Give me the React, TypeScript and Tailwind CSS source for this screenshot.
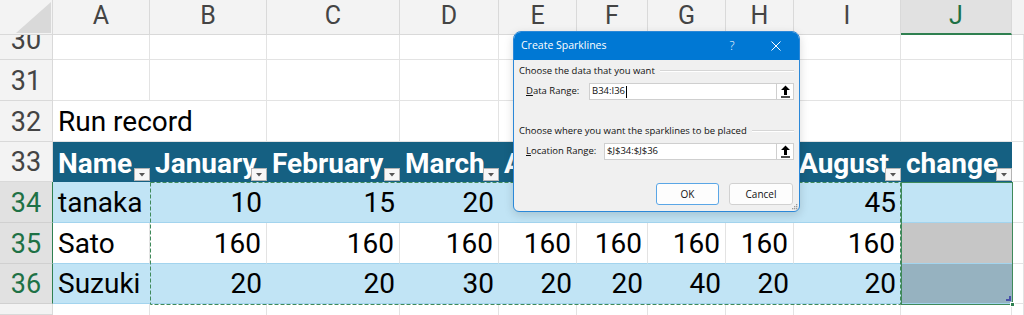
import type { ReactNode } from 'react';

const letters = ['A', 'B', 'C', 'D', 'E', 'F', 'G', 'H', 'I', 'J'];
const headers = ['Name', 'January', 'February', 'March', 'April', 'May', 'June', 'July', 'August', 'change'];

// rows 34-36 of the table; J is the empty "change" column
const records = [
  { row: 34, name: 'tanaka', values: [10, 15, 20, 25, 30, 35, 40, 45], band: true, j: 'bg-[#c1e4f5]' },
  { row: 35, name: 'Sato', values: [160, 160, 160, 160, 160, 160, 160, 160], band: false, j: 'bg-[#c6c6c6]' },
  { row: 36, name: 'Suzuki', values: [20, 20, 30, 20, 20, 40, 20, 20], band: true, j: 'bg-[#96b2c0]' },
];

const blank = 'border-r border-b border-[#e3e3e3] bg-white';

function RowHead({ n, selected = false }: { n?: number; selected?: boolean }) {
  return (
    <div
      className={
        selected
          ? 'flex items-end justify-center overflow-hidden pb-[5px] text-[27px] leading-[27px] bg-[#e1e1e1] text-[#1e7145] border-b border-b-[#d0d0d0] border-r border-r-[#2f8050]'
          : 'flex items-end justify-center overflow-hidden pb-[5px] text-[27px] leading-[27px] bg-[#f3f3f3] text-[#444] border-b border-r border-[#d9d9d9]'
      }
    >
      {n}
    </div>
  );
}

function Cell({ children, className, right = false }: { children?: ReactNode; className: string; right?: boolean }) {
  return (
    <div
      className={`flex items-end whitespace-nowrap pb-[5px] text-[28px] leading-[28px] text-black ${
        right ? 'justify-end pr-[5px]' : 'pl-[5px]'
      } ${className}`}
    >
      {children}
    </div>
  );
}

function FilterButton() {
  return (
    <span className="absolute right-0 bottom-[1px] flex h-[13px] w-[16px] items-center justify-center border border-[#b4b4b4] bg-[#f7f7f7]">
      <svg width="6" height="4" viewBox="0 0 6 4">
        <path d="M0 0h6L3 3.5z" fill="#555" />
      </svg>
    </span>
  );
}

function UpArrow() {
  return (
    <svg width="11" height="13" viewBox="0 0 11 13">
      <path d="M5.5 0.5L10 5H7V10H4V5H1z" fill="#000" />
      <rect x="1" y="11.3" width="9" height="1.4" fill="#000" />
    </svg>
  );
}

function RangeRow({ label, hot, value, labelWidth, caret = false }: { label: string; hot: string; value: string; labelWidth: string; caret?: boolean }) {
  return (
    <div className="mt-[5px] flex h-[17px] items-center">
      <span className={`${labelWidth} whitespace-nowrap pl-[7px]`}>
        <span className="underline">{hot}</span>
        {label}
      </span>
      <div className="flex h-full flex-1 items-center border border-[#cfcfcf] bg-white pl-[2px]">
        <span>{value}</span>
        {caret && <span className="ml-[1px] inline-block h-[12px] w-px bg-black" />}
        <span className="ml-auto flex h-full w-[17px] items-center justify-center border-l border-[#cfcfcf]">
          <UpArrow />
        </span>
      </div>
    </div>
  );
}

function Heading({ text, top }: { text: string; top: string }) {
  return (
    <div className={`flex h-[14px] items-center leading-[14px] ${top}`}>
      <span>{text}</span>
      <div className="ml-[5px] flex-1 border-t border-b border-t-[#d6d6d6] border-b-white" />
    </div>
  );
}

function SparklineDialog() {
  return (
    <div className="absolute left-[513px] top-[31px] h-[181px] w-[287px] overflow-hidden rounded-t-[8px] rounded-b-[6px] border border-[#2b88d8] bg-[#f0f0f0] font-['Open_Sans',sans-serif] text-[9.5px] text-[#111] shadow-[0_3px_10px_rgba(0,0,0,0.15)]">
      <div className="flex h-[28px] items-center bg-[#0078d4] pl-[7px] text-[10.5px] text-white">
        <span>Create Sparklines</span>
        <span className="ml-auto w-[14px] text-center text-[12px] font-light">?</span>
        <svg className="ml-[32px] mr-[18px]" width="10" height="10" viewBox="0 0 10 10">
          <path d="M0.5 0.5L9.5 9.5M9.5 0.5L0.5 9.5" stroke="#fff" strokeWidth="1" />
        </svg>
      </div>

      <div className="px-[5px]">
        <Heading text="Choose the data that you want" top="mt-[4px]" />
        <RangeRow hot="D" label="ata Range:" value="B34:I36" labelWidth="w-[70px]" caret />
        <Heading text="Choose where you want the sparklines to be placed" top="mt-[24px]" />
        <RangeRow hot="L" label="ocation Range:" value="$J$34:$J$36" labelWidth="w-[85px]" />

        <div className="mt-[23px] flex justify-end gap-[10px] pr-[1px]">
          <button className="h-[22px] w-[63px] rounded-[3px] border border-[#5aa6e6] bg-[#fdfdfd] text-[10px]">OK</button>
          <button className="h-[22px] w-[64px] rounded-[3px] border border-[#d1d1d1] bg-[#fdfdfd] text-[10px]">Cancel</button>
        </div>
      </div>

      {/* resize grip */}
      <svg className="absolute right-[1px] bottom-[1px]" width="8" height="8" viewBox="0 0 8 8">
        {[
          [6, 2], [4, 4], [6, 4], [2, 6], [4, 6], [6, 6],
        ].map(([x, y]) => (
          <rect key={`${x}-${y}`} x={x} y={y} width="1.3" height="1.3" fill="#9a9a9a" />
        ))}
      </svg>
    </div>
  );
}

export default function App() {
  return (
    <div className="relative h-[315px] w-[1024px] overflow-hidden bg-white font-[Roboto,sans-serif]">
      <div className="grid h-full grid-cols-[53px_97px_117px_133px_99px_78px_71px_78px_68px_107px_111px_12px] grid-rows-[35px_25px_41px_41px_40px_41px_41px_40px_11px]">
        {/* column letters */}
        <div className="border-r border-b border-[#d9d9d9] bg-[#f3f3f3]">
          <svg width="52" height="34" viewBox="0 0 52 34">
            <path d="M16 33H51V2z" fill="#d9d9d9" />
          </svg>
        </div>
        {letters.map((l) =>
          l === 'J' ? (
            <div key={l} className="flex items-end justify-center border-r border-r-[#d9d9d9] border-b-2 border-b-[#2f8050] bg-[#e1e1e1] pb-[5px] text-[25px] leading-[25px] text-[#1e7145]">
              {l}
            </div>
          ) : (
            <div key={l} className="flex items-end justify-center border-r border-b border-[#d9d9d9] bg-[#f3f3f3] pb-[6px] text-[25px] leading-[25px] text-[#444]">
              {l}
            </div>
          )
        )}
        <div className="border-b border-[#d9d9d9] bg-[#f3f3f3]" />

        {/* rows 30 and 31 */}
        {[30, 31].map((n) => (
          <div key={n} className="contents">
            <RowHead n={n} />
            {Array.from({ length: 11 }).map((_, i) => (
              <div key={i} className={blank} />
            ))}
          </div>
        ))}

        {/* row 32 */}
        <RowHead n={32} />
        <Cell className="border-b border-[#e3e3e3]">Run record</Cell>
        {Array.from({ length: 10 }).map((_, i) => (
          <div key={i} className="border-r border-b border-[#e3e3e3]" />
        ))}

        {/* row 33: table header */}
        <RowHead n={33} />
        {headers.map((h) => (
          <div key={h} className="relative flex items-end whitespace-nowrap bg-[#156082] pb-[4px] pl-[5px] text-[28px] font-bold leading-[28px] text-white">
            {h}
            <FilterButton />
          </div>
        ))}
        <div className={blank} />

        {/* rows 34-36 */}
        {records.map((r) => (
          <div key={r.row} className="contents">
            <RowHead n={r.row} selected />
            <Cell className={r.band ? 'bg-[#c1e4f5] border-b border-[#a3d4ee]' : 'bg-white border-r border-r-[#e3e3e3] border-b border-b-[#a3d4ee]'}>
              {r.name}
            </Cell>
            {r.values.map((v, i) => (
              <Cell
                key={i}
                right
                className={r.band ? 'bg-[#c1e4f5] border-b border-[#a3d4ee]' : 'bg-white border-r border-r-[#e3e3e3] border-b border-b-[#a3d4ee]'}
              >
                {v}
              </Cell>
            ))}
            <div className={`${r.j} border-b border-[#a3d4ee]`} />
            <div className={blank} />
          </div>
        ))}

        {/* partial row 37 */}
        <RowHead />
        {Array.from({ length: 11 }).map((_, i) => (
          <div key={i} className="border-r border-[#e3e3e3] bg-white" />
        ))}
      </div>

      {/* copy marquee round B34:I36 */}
      <svg className="absolute left-[150px] top-[182px]" width="751" height="123" viewBox="0 0 751 123">
        <rect x="0.5" y="0.5" width="750" height="122" fill="none" stroke="#3f8a5a" strokeDasharray="4 2" />
      </svg>
      {/* selection J34:J36 */}
      <div className="absolute left-[901px] top-[182px] h-[123px] w-[112px] border border-[#3f8a5a]" />
      <div className="absolute left-[1006px] top-[299px] h-[2px] w-[5px] bg-[#4650a8]" />
      <div className="absolute left-[1009px] top-[296px] h-[5px] w-[2px] bg-[#4650a8]" />
      <div className="absolute left-[1010px] top-[302px] h-[5px] w-[5px] border border-white bg-[#2f8050]" />

      <SparklineDialog />
    </div>
  );
}
